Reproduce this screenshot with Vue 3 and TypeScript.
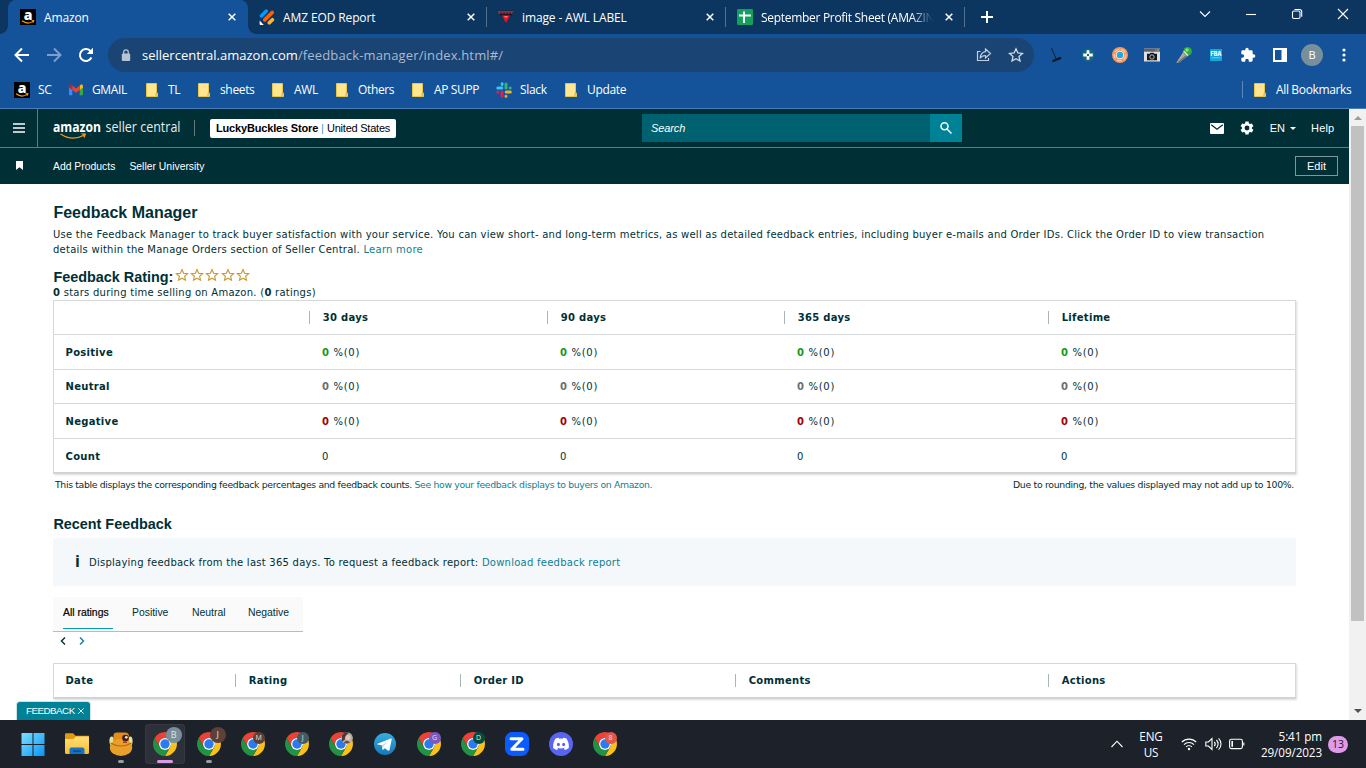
<script setup lang="ts">
interface Tab { title: string; icon: string; active?: boolean; cls?: string }
interface Bookmark { label: string; icon: string }
interface TaskItem { kind: string; letter?: string; color?: string; big?: boolean; running?: boolean; active?: boolean; photo?: boolean }

const tabs: Tab[] = [
  { title: 'Amazon', icon: 'i-amazon', active: true },
  { title: 'AMZ EOD Report', icon: 'i-jotform' },
  { title: 'image - AWL LABEL', icon: 'i-awl' },
  { title: 'September Profit Sheet (AMAZIN', icon: 'i-sheets', cls: 'long' },
]

const bookmarks: Bookmark[] = [
  { label: 'SC', icon: 'i-amazon' },
  { label: 'GMAIL', icon: 'i-gmail' },
  { label: 'TL', icon: 'i-folder' },
  { label: 'sheets', icon: 'i-folder' },
  { label: 'AWL', icon: 'i-folder' },
  { label: 'Others', icon: 'i-folder' },
  { label: 'AP SUPP', icon: 'i-folder' },
  { label: 'Slack', icon: 'i-slack' },
  { label: 'Update', icon: 'i-folder' },
]

const extensions: string[] = ['i-broom', 'i-cross', 'i-ring', 'i-camera', 'i-mic', 'i-fba', 'i-puzzle', 'i-panel']

const periods: string[] = ['30 days', '90 days', '365 days', 'Lifetime']
const ratings = [
  { name: 'Positive', tone: 'good' },
  { name: 'Neutral', tone: 'mid' },
  { name: 'Negative', tone: 'bad' },
]
const filters: string[] = ['All ratings', 'Positive', 'Neutral', 'Negative']
const recentColumns: string[] = ['Date', 'Rating', 'Order ID', 'Comments', 'Actions']

const tasks: TaskItem[] = [
  { kind: 'i-windows' },
  { kind: 'i-explorer' },
  { kind: 'i-bee', running: true },
  { kind: 'i-chrome', letter: 'B', color: '#78909c', big: true, active: true },
  { kind: 'i-chrome', letter: 'J', color: '#5d4037', big: true, running: true },
  { kind: 'i-chrome', letter: 'M', color: '#5d4037' },
  { kind: 'i-chrome', letter: 'J', color: '#455a64' },
  { kind: 'i-chrome', photo: true },
  { kind: 'i-telegram' },
  { kind: 'i-chrome', letter: 'G', color: '#7e57c2' },
  { kind: 'i-chrome', letter: 'D', color: '#004d40' },
  { kind: 'i-zoom' },
  { kind: 'i-discord' },
  { kind: 'i-chrome', letter: '8', color: '#e0564a' },
]
</script>

<template>
  <div class="screen">
    <svg class="sprites" width="0" height="0">
      <defs>
        <linearGradient id="gWin" x1="0" y1="0" x2="1" y2="1"><stop offset="0" stop-color="#7be0ff" /><stop offset="1" stop-color="#0a93f5" /></linearGradient>
        <linearGradient id="gFold" x1="0" y1="0" x2="0" y2="1"><stop offset="0" stop-color="#ffe07a" /><stop offset="1" stop-color="#f9bd2b" /></linearGradient>
        <linearGradient id="gTel" x1="0" y1="0" x2="0" y2="1"><stop offset="0" stop-color="#37aee2" /><stop offset="1" stop-color="#1478b8" /></linearGradient>
      </defs>
      <symbol id="i-amazon" viewBox="0 0 16 16">
        <rect width="16" height="16" fill="#000" />
        <path d="M2 11.8c3.600 2.700 8 2.700 11.200.6M11.600 11.800l2.200-.1-.6 2" fill="none" stroke="#f90" stroke-width="1.100" />
      </symbol>
      <symbol id="i-jotform" viewBox="0 0 16 16">
        <g stroke-linecap="round" fill="none">
          <path d="M2.400 7 7.300 2" stroke="#0099ff" stroke-width="3.400" />
          <path d="M5.800 10.800 13.200 3.500" stroke="#ff6100" stroke-width="3.800" />
          <path d="M10.300 13.800 13.400 10.700" stroke="#ffb629" stroke-width="3.600" />
        </g>
        <path d="M.6 11.600 4.800 16H1.600a1 1 0 0 1-1-1Z" fill="#fff" />
      </symbol>
      <symbol id="i-awl" viewBox="0 0 16 16">
        <path d="M0 1.800h16l-2.500 4.700h-11Z" fill="#25131f" />
        <path d="M.5 3.800h15" stroke="#c9475f" stroke-width="1.300" stroke-dasharray="2 1" />
        <path d="M.5 2.500h15" stroke="#b7a04f" stroke-width=".8" stroke-dasharray="1 1" />
        <path d="M4 6.500h8L8 14Z" fill="#f50f1a" /><path d="M6.500 7.800h3" stroke="#ffb0b0" stroke-width="1" />
      </symbol>
      <symbol id="i-sheets" viewBox="0 0 16 16">
        <rect width="16" height="16" rx="1.200" fill="#12a05c" />
        <path d="M2 6.600h12M7 2.500v11.500" stroke="#fff" stroke-width="2" />
      </symbol>
      <symbol id="i-gmail" viewBox="0 0 16 16">
        <path d="M1 5v7.200c0 .6.4 1 1 1h2.300V7Z" fill="#4285f4" />
        <path d="M15 5v7.200c0 .6-.4 1-1 1h-2.300V7Z" fill="#34a853" />
        <path d="M11.700 4v4L15 5.400V4.200c0-1.600-1.700-2-2.600-1.200Z" fill="#fbbc04" />
        <path d="M4.300 4v4L1 5.400V4.200C1 2.600 2.700 2.200 3.600 3Z" fill="#c5221f" />
        <path d="M4.300 3.600 8 6.400 11.700 3.600V8L8 10.800 4.300 8Z" fill="#ea4335" />
      </symbol>
      <symbol id="i-folder" viewBox="0 0 16 16">
        <path d="M2.500 1.500h10v9.200l1 .4v3.400h-11Z" fill="#ffe58f" stroke="#eac54a" />
        <path d="M12 14.500v-3.200h1.500" fill="none" stroke="#d9ab2c" />
      </symbol>
      <symbol id="i-slack" viewBox="0 0 16 16">
        <g fill="none" stroke-width="3" stroke-linecap="round">
          <path d="M1.800 6.100H5.800M6 1.800h.2" stroke="#36c5f0" /><path d="M6.100 3v.2" stroke="#36c5f0" stroke-width="2" />
          <path d="M10 2v4M14.200 6.100h0" stroke="#2eb67d" />
          <path d="M10.200 10H14.300M10 14.200h0" stroke="#ecb22e" />
          <path d="M6 10v4.100M1.800 10h0" stroke="#e01e5a" />
        </g>
      </symbol>
      <symbol id="i-broom" viewBox="0 0 16 16">
        <path d="M3.500 1 8.200 12" stroke="#123" stroke-width="1" /><path d="M4.500 14.300 13 10.700" stroke="#0b1622" stroke-width="2.200" />
      </symbol>
      <symbol id="i-cross" viewBox="0 0 16 16">
        <circle cx="8" cy="8" r="6.800" fill="#14647e" />
        <path d="M6.600 3.200h2.800v3.400h3.400v2.800H9.400v3.400H6.600V9.400H3.200V6.600h3.400Z" fill="#fff" /><rect x="7" y="7" width="2" height="2" fill="#14647e" />
      </symbol>
      <symbol id="i-ring" viewBox="0 0 16 16">
        <circle cx="8" cy="8" r="8" fill="#f7955a" /><circle cx="8" cy="8" r="5.800" fill="none" stroke="#ffd0aa" stroke-width="1.200" stroke-dasharray="5 2" /><circle cx="8" cy="8" r="4.200" fill="#fde6d4" /><circle cx="8" cy="8" r="3.200" fill="#20a8e8" />
      </symbol>
      <symbol id="i-camera" viewBox="0 0 16 16">
        <rect y="1.500" width="16" height="13" fill="#dfe0e2" /><rect y="1.500" width="16" height="3.200" fill="#59616c" />
        <path d="M11 3.200h1.500" stroke="#ef5a4c" stroke-width="2" /><path d="M13 3.200h2" stroke="#55b46b" stroke-width="2" />
        <path d="M3 6.800h2.800l.8-1h3l.8 1H13v6.400H3Z" fill="#15181b" /><circle cx="8" cy="10" r="2.200" fill="#15181b" stroke="#e5e5e5" stroke-width=".8" />
      </symbol>
      <symbol id="i-mic" viewBox="0 0 16 16">
        <path d="M7.200 5 11.500 9 3 15.800H.3Z" fill="#aaa9a4" /><path d="M10 9 2 15.500" stroke="#6f6c68" stroke-width="1.200" />
        <circle cx="11.600" cy="4.400" r="4.300" fill="#2fac3e" /><circle cx="11" cy="3" r="1.700" fill="#91dc72" />
        <path d="M7.600 4.200 12 8.600" stroke="#dcdcdc" stroke-width="1.600" />
      </symbol>
      <symbol id="i-fba" viewBox="0 0 16 16">
        <rect x="2" y="2" width="12" height="12" fill="#12a5d8" />
        <path d="M3.500 10.800h9" stroke="#7fcbe8" stroke-width=".9" />
      </symbol>
      <symbol id="i-puzzle" viewBox="0 0 24 24">
        <path d="M20.500 11H19V7a2 2 0 0 0-2-2h-4V3.500a2.500 2.500 0 0 0-5 0V5H4a2 2 0 0 0-2 2v3.800h1.500a2.700 2.700 0 0 1 0 5.400H2V20a2 2 0 0 0 2 2h3.800v-1.500a2.700 2.700 0 0 1 5.400 0V22H17a2 2 0 0 0 2-2v-4h1.500a2.500 2.500 0 0 0 0-5Z" fill="#fff" />
      </symbol>
      <symbol id="i-panel" viewBox="0 0 16 16">
        <path fill-rule="evenodd" d="M1 1h14v14H1ZM3 3v10h6.500V3Z" fill="#fff" />
      </symbol>
      <symbol id="i-windows" viewBox="0 0 24 24">
        <path d="M.5 1h11v11H.5ZM12.500 1h11v11h-11ZM.5 13h11v11H.5ZM12.500 13h11v11h-11Z" fill="url(#gWin)" />
      </symbol>
      <symbol id="i-explorer" viewBox="0 0 24 24">
        <path d="M0 2.500a1.200 1.200 0 0 1 1.200-1.200H8l2.500 2.500H24V10H0Z" fill="#e29a10" />
        <path d="M0 7h8.500l2.500-2.500h12a1 1 0 0 1 1 1V20.500a1.500 1.500 0 0 1-1.500 1.500h-21A1.500 1.500 0 0 1 0 20.500Z" fill="url(#gFold)" />
        <path d="M4.500 22v-4.500a2 2 0 0 1 2-2h11a2 2 0 0 1 2 2V22Z" fill="#1572c4" /><path d="M8 19.200h8" stroke="#0b4d8c" stroke-width="1.500" />
      </symbol>
      <symbol id="i-bee" viewBox="0 0 24 24">
        <ellipse cx="2.700" cy="9" rx="2.300" ry="4.500" fill="#d8e6a0" /><ellipse cx="21.300" cy="9" rx="2.300" ry="4.500" fill="#d8e6a0" />
        <path d="M4.500 3.500q0-3 3.500-3h8q4 0 4 4v8H4Z" fill="#e58b1c" />
        <ellipse cx="12" cy="15.500" rx="11.200" ry="8.500" fill="#e8a02a" /><path d="M1.500 11Q12 17 22.500 11" stroke="#b36a12" stroke-width="1.200" fill="none" />
        <circle cx="16.500" cy="6" r="3.300" fill="#3b211c" /><circle cx="17.300" cy="5.300" r="1.400" fill="#efd8d0" /><path d="M14 10.200h4" stroke="#b3261e" stroke-width="1.400" />
      </symbol>
      <symbol id="i-chrome" viewBox="0 0 24 24">
        <path d="M12 6H22.390A12 12 0 0 0 1.610 6L6.800 15A6 6 0 0 1 12 6Z" fill="#ea4335" />
        <path d="M22.390 6A12 12 0 0 1 12 24L17.200 15A6 6 0 0 0 12 6Z" fill="#fbc116" />
        <path d="M1.610 6A12 12 0 0 0 12 24L17.200 15A6 6 0 0 1 6.800 15Z" fill="#229342" />
        <circle cx="12" cy="12" r="6" fill="#fff" /><circle cx="12" cy="12" r="4.700" fill="#2a7af0" />
      </symbol>
      <symbol id="i-telegram" viewBox="0 0 24 24">
        <circle cx="12" cy="12" r="11" fill="url(#gTel)" />
        <path d="M4.500 11.800 17.800 6.600c.6-.2 1.100.2.9 1l-2.200 10.500c-.2.8-.7.9-1.300.6l-3.400-2.500-1.700 1.600c-.3.3-.6.3-.7-.2L8.700 13.300 4.600 12.500c-.5-.2-.5-.5-.1-.7Z" fill="#fff" />
        <path d="M8.800 13.400 15.500 9 10.300 14.200 9.800 17.400" fill="#b7d5e8" />
      </symbol>
      <symbol id="i-zoom" viewBox="0 0 24 24">
        <rect width="24" height="24" rx="7.500" fill="#0b5cff" />
        <path d="M6 6.800h11L6.800 17.300H18" fill="none" stroke="#fff" stroke-width="3" stroke-linecap="round" stroke-linejoin="round" />
      </symbol>
      <symbol id="i-discord" viewBox="0 0 24 24">
        <circle cx="12" cy="12" r="12" fill="#5865f2" />
        <path transform="translate(-1.800 -1.800) scale(1.150)" d="M16.700 7.300a12 12 0 0 0-2.700-.8l-.5.9a11 11 0 0 0-3 0L10 6.500a12 12 0 0 0-2.700.8C5.500 10 4.900 12.800 5.200 15.500a12 12 0 0 0 3.500 1.800l.8-1.300-1-.5.3-.3a8.600 8.600 0 0 0 6.400 0l.3.3-1 .5.8 1.300a12 12 0 0 0 3.500-1.800c.3-3.200-.6-5.900-2.100-8.200Z" fill="#fff" />
        <ellipse cx="9.400" cy="12.500" rx="1.500" ry="1.700" fill="#5865f2" /><ellipse cx="14.600" cy="12.500" rx="1.500" ry="1.700" fill="#5865f2" />
      </symbol>
      <symbol id="i-star" viewBox="0 0 24 24">
        <path d="M12 2.600l2.800 6.400 6.900.6-5.200 4.600 1.500 6.800L12 17.500 6 21l1.500-6.800L2.300 9.600l6.900-.6Z" fill="none" stroke="currentColor" stroke-width="1.900" />
      </symbol>
    </svg>

    <header class="browser">
      <div class="strip">
        <div v-for="t in tabs" :key="t.title" class="tab" :class="{ active: t.active }">
          <span class="ico"><svg class="i16"><use :href="'#' + t.icon" /></svg><em v-if="t.icon === 'i-amazon'" class="letter-a">a</em></span>
          <span class="tab-title" :class="t.cls">{{ t.title }}</span>
          <svg class="close" viewBox="0 0 8 8"><path d="M.7.7 7.300 7.300M7.300.7.7 7.300" /></svg>
        </div>
        <svg class="plus" viewBox="0 0 12 12"><path d="M6 0v12M0 6h12" /></svg>
        <div class="win-controls">
          <svg viewBox="0 0 12 12"><path d="M1 3.500 6 8.500 11 3.500" /></svg>
          <svg viewBox="0 0 12 12"><path d="M1 6.500h10" /></svg>
          <svg viewBox="0 0 12 12"><rect x="1.500" y="3" width="7.500" height="7.500" rx="1.500" /><path d="M3.500 1.500h5a2.200 2.200 0 0 1 2.200 2.200v5" /></svg>
          <svg viewBox="0 0 12 12"><path d="M1 1 11 11M11 1 1 11" /></svg>
        </div>
      </div>

      <div class="toolbar">
        <div class="nav">
          <svg viewBox="0 0 16 16"><path d="M15 8H2M8 1.500 1.500 8 8 14.500" /></svg>
          <svg viewBox="0 0 16 16" class="dim"><path d="M1 8h13M8 1.500 14.500 8 8 14.500" /></svg>
          <svg viewBox="0 0 16 16"><path d="M13.400 10.500A6 6 0 1 1 12.200 3.800L13.500 5.200" /><path class="solid" d="M15 .8V7H8.800Z" /></svg>
        </div>
        <div class="omnibox">
          <svg class="lock" viewBox="0 0 10 13"><rect x=".8" y="4.500" width="8.400" height="7.500" rx="1" /><path d="M2.700 5V3.200a2.300 2.300 0 0 1 4.600 0V5" /></svg>
          <span class="url"><b>sellercentral.amazon.com</b><i>/feedback-manager/index.html#/</i></span>
          <svg class="share" viewBox="0 0 16 16"><path d="M4.500 4.500h-3v9h11V11" /><path d="M9.500 2 14.500 6.500 9.500 11V8.500C7 8.500 5.200 9.300 4 11.300 4.400 7.500 6.300 5 9.500 4.600Z" /></svg>
          <svg class="fav"><use href="#i-star" /></svg>
        </div>
        <div class="exts">
          <span v-for="e in extensions" :key="e" class="ico"><svg class="i16"><use :href="'#' + e" /></svg><em v-if="e === 'i-fba'" class="letter-fba">FBA</em></span>
          <span class="avatar">B</span>
          <svg class="i16" viewBox="0 0 16 16"><circle cx="8" cy="3" r="1.600" /><circle cx="8" cy="8" r="1.600" /><circle cx="8" cy="13" r="1.600" /></svg>
        </div>
      </div>

      <div class="bookmarks">
        <div class="marks">
          <span v-for="b in bookmarks" :key="b.label" class="mark"><span class="ico"><svg class="i16"><use :href="'#' + b.icon" /></svg><em v-if="b.icon === 'i-amazon'" class="letter-a">a</em></span>{{ b.label }}</span>
        </div>
        <span class="mark all"><svg class="i16"><use href="#i-folder" /></svg>All Bookmarks</span>
      </div>
    </header>

    <div class="viewport">
      <div class="page">
        <div class="topbar">
          <div class="burger"><svg viewBox="0 0 12 10"><path d="M0 1h12M0 5h12M0 9h12" /></svg></div>
          <svg class="logo" viewBox="0 0 130 28">
            <text class="amz" x="0" y="17" textLength="48" lengthAdjust="spacingAndGlyphs">amazon</text>
            <text class="sc" x="52.500" y="17" textLength="75" lengthAdjust="spacingAndGlyphs">seller central</text>
            <path d="M7.500 19C15 24 24 24 31.500 20M28.500 18.900l3.700.2-1.200 3.400" />
          </svg>
          <span class="bar"></span>
          <div class="store"><b>LuckyBuckles Store</b><em>|</em><span>United States</span></div>
          <div class="search">
            <span>Search</span>
            <div class="search-btn"><svg viewBox="0 0 14 14"><circle cx="5.500" cy="5.200" r="3.500" /><path d="M8 8 12.500 12.500" /></svg></div>
          </div>
          <div class="util">
            <svg class="mail" viewBox="0 0 14 11"><rect width="14" height="11" rx="1" fill="#fff" /><path d="M1.200 1.800 7 6.300 12.800 1.800" fill="none" stroke="#002f36" stroke-width="1.300" /></svg>
            <svg class="gear" viewBox="0 0 24 24"><path fill="#fff" fill-rule="evenodd" d="M9.300 1h5.400l.6 3.200 1.900 1.100 3.100-1.100L23 8.800l-2.500 2.100v2.200L23 15.200l-2.700 4.600-3.100-1.100-1.900 1.100-.6 3.200H9.300l-.6-3.200-1.900-1.100-3.100 1.100L1 15.200l2.500-2.100v-2.200L1 8.800l2.700-4.600 3.100 1.100 1.900-1.100ZM12 7.800a4.200 4.200 0 1 0 0 8.400 4.200 4.200 0 0 0 0-8.400Z" /></svg>
            <span class="lang">EN<i></i></span>
            <span class="help">Help</span>
          </div>
        </div>
        <div class="subbar">
          <svg class="flag" viewBox="0 0 7 9"><path d="M0 0h7v9L3.500 6.300 0 9Z" fill="#fff" /></svg>
          <span class="link-a">Add Products</span><span>Seller University</span>
          <button class="edit">Edit</button>
        </div>

        <main class="content">
          <h1>Feedback Manager</h1>
          <p class="intro">Use the Feedback Manager to track buyer satisfaction with your service. You can view short- and long-term metrics, as well as detailed feedback entries, including buyer e-mails and Order IDs. Click the Order ID to view transaction<br>details within the Manage Orders section of Seller Central. <a>Learn more</a></p>
          <h2 class="rating">Feedback Rating:<span class="stars"><svg v-for="n in 5" :key="n"><use href="#i-star" /></svg></span></h2>
          <p class="since"><b>0</b> stars during time selling on Amazon. (<b>0</b> ratings)</p>

          <div class="table metrics">
            <div class="row head"><span></span><span v-for="p in periods" :key="p" class="sep">{{ p }}</span></div>
            <div v-for="r in ratings" :key="r.name" class="row">
              <b class="name">{{ r.name }}</b>
              <span v-for="p in periods" :key="p" class="cell"><b :class="r.tone">0</b> %(0)</span>
            </div>
            <div class="row total"><b class="name">Count</b><span v-for="p in periods" :key="p" class="cell">0</span></div>
          </div>
          <div class="caption">
            <span>This table displays the corresponding feedback percentages and feedback counts. <a>See how your feedback displays to buyers on Amazon.</a></span>
            <span class="rounding">Due to rounding, the values displayed may not add up to 100%.</span>
          </div>

          <h2 class="recent">Recent Feedback</h2>
          <div class="info"><b>i</b><span>Displaying feedback from the last 365 days. To request a feedback report: <a>Download feedback report</a></span></div>
          <div class="filters"><span v-for="(f, i) in filters" :key="f" :class="{ on: i === 0 }">{{ f }}</span></div>
          <div class="pager">
            <svg viewBox="0 0 6 8"><path d="M5 .6 1.500 4 5 7.400" /></svg>
            <svg viewBox="0 0 6 8" class="next"><path d="M1 .6 4.500 4 1 7.400" /></svg>
          </div>
          <div class="table entries"><div class="row head"><span v-for="(c, i) in recentColumns" :key="c" :class="i ? 'sep' : 'name'">{{ c }}</span></div></div>
        </main>
        <div class="fb-tab">FEEDBACK<svg viewBox="0 0 6 6"><path d="M.3.3 5.700 5.700M5.700.3.3 5.700" /></svg></div>
      </div>
      <div class="scroll"><i class="up"></i><div class="thumb"></div><i class="down"></i></div>
    </div>

    <footer class="taskbar">
      <div class="apps">
        <div v-for="(t, i) in tasks" :key="i" class="app" :class="{ active: t.active, running: t.running }">
          <svg class="app-icon"><use :href="'#' + t.kind" /></svg>
          <span v-if="t.letter" class="badge" :class="{ big: t.big }" :style="{ background: t.color }">{{ t.letter }}</span>
          <svg v-if="t.photo" class="badge" viewBox="0 0 12 12"><circle cx="6" cy="6" r="6" fill="#b9aaa2" /><path d="M1 3.500A6 6 0 0 1 8 .4L5 3.500 3.500 8 1 9.500Z" fill="#4a3a38" /><circle cx="7" cy="5.500" r="2.600" fill="#e3c6b8" /><path d="M2.500 10.500 6 8.500l3 2A6 6 0 0 1 2.500 10.500Z" fill="#6b4a42" /></svg>
        </div>
      </div>
      <div class="tray">
        <svg class="chev" viewBox="0 0 12 8"><path d="M.5 7 6 1.200 11.500 7" /></svg>
        <div class="kbd">ENG<br>US</div>
        <svg class="wifi" viewBox="0 0 16 14"><path d="M.8 5.200a10 10 0 0 1 14.400 0M3 7.600a7 7 0 0 1 10 0M5.200 9.900a4 4 0 0 1 5.600 0" /><circle cx="8" cy="12" r="1.200" /></svg>
        <svg class="vol" viewBox="0 0 17 14"><path d="M.8 5h2.600L7 1.600v10.800L3.400 9H.8ZM9.200 4.800a3.200 3.200 0 0 1 0 4.400M11.400 3a5.600 5.600 0 0 1 0 8M13.600 1.300a8 8 0 0 1 0 11.400" /></svg>
        <svg class="bat" viewBox="0 0 16 12"><rect x=".6" y="1.200" width="12.800" height="9.400" rx="1.800" /><path d="M14.800 4.500v3" /><rect class="fill" x="2.400" y="3" width="1.600" height="5.800" /></svg>
        <div class="clock">5:41 pm<br>29/09/2023</div>
        <span class="count">13</span>
      </div>
    </footer>
  </div>
</template>

<style>
html, body { margin: 0; overflow: hidden; }
</style>

<style scoped>
* { box-sizing: border-box; }
.screen { width: 1366px; height: 768px; display: flex; flex-direction: column; overflow: hidden; font-family: "Open Sans", "Noto Sans", sans-serif; background: #fff; }
.sprites { position: absolute; }
svg { display: block; flex: none; }
.i16 { width: 16px; height: 16px; }
.ico { position: relative; width: 16px; height: 16px; flex: none; }
.letter-a { position: absolute; left: 0; top: -2px; width: 16px; font: 800 14px/16px "Open Sans", sans-serif; letter-spacing: 0; text-align: center; color: #fff; }
.letter-fba { position: absolute; left: 1px; top: 3px; width: 14px; font: 800 5.5px/8px Inter, sans-serif; letter-spacing: 0; text-align: center; color: #fff; }

.browser { height: 109px; background: #14539a; border-bottom: 1px solid #4a7db5; color: #fff; }
.strip { height: 34px; background: #0c3560; display: flex; align-items: center; padding-left: 8px; }
.tab { width: 239px; flex: none; height: 34px; display: flex; align-items: center; padding: 0 11px 0 12px; position: relative; font-size: 12px; letter-spacing: -0.12px; }
.tab:not(.active)::after { content: ""; position: absolute; right: -1px; top: 7px; width: 1px; height: 20px; background: #56718f; }
.tab.active { background: #14539a; border-radius: 8px 8px 0 0; box-shadow: 1px 0 0 #14539a; }
.tab.active::before, .tab.active::after { content: ""; position: absolute; bottom: 0; width: 8px; height: 8px; }
.tab.active::before { left: -8px; background: radial-gradient(circle at 0 0, transparent 7.5px, #14539a 8px); }
.tab.active::after { right: -9px; background: radial-gradient(circle at 100% 0, transparent 7.5px, #14539a 8px); }
.tab-title { margin-left: 8px; flex: 1; min-width: 0; white-space: nowrap; margin-right: 11px; }
.tab-title.long { letter-spacing: -0.3px; -webkit-mask-image: linear-gradient(90deg, #000 150px, transparent 172px); mask-image: linear-gradient(90deg, #000 150px, transparent 172px); }
.close { width: 8px; height: 8px; fill: none; stroke: #fff; stroke-width: 1.5; }
.plus { width: 12px; height: 12px; margin-left: 17px; stroke: #fff; stroke-width: 2; }
.win-controls { margin-left: auto; display: flex; gap: 34px; padding-right: 17px; margin-bottom: 6px; }
.win-controls svg { width: 12px; height: 12px; fill: none; stroke: #fff; stroke-width: 1.1; }

.toolbar { height: 42px; display: flex; align-items: center; padding-left: 14px; }
.nav { display: flex; gap: 16px; width: 94px; }
.nav svg { width: 16px; height: 16px; fill: none; stroke: #fff; stroke-width: 2; }
.nav .solid { fill: #fff; stroke: none; }
.nav .dim { stroke: #7d9fcb; }
.omnibox { width: 926px; height: 34px; border-radius: 17px; background: #1a4473; display: flex; align-items: center; padding: 0 10px 0 13px; }
.lock { width: 10px; height: 13px; margin-right: 11px; fill: #b9c4d2; }
.lock path { fill: none; stroke: #b9c4d2; stroke-width: 1.3; }
.url { font-size: 13px; flex: 1; }
.url b { font-weight: 400; }
.url i { font-style: normal; color: #a9bbd0; letter-spacing: 0.15px; }
.share { width: 16px; height: 16px; margin-right: 16px; fill: none; stroke: #c3cfdd; stroke-width: 1.2; }
.fav { width: 16px; height: 16px; color: #d3dbe6; }
.exts { display: flex; align-items: center; gap: 16px; padding-left: 14px; }
.exts > svg { fill: #fff; }
.avatar { width: 22px; height: 22px; margin: 0 -3px; border-radius: 50%; background: #78909c; font-size: 11px; line-height: 22px; text-align: center; }
.bookmarks { height: 32px; display: flex; align-items: center; justify-content: space-between; padding: 0 0 5px 14px; font-size: 12px; letter-spacing: -0.35px; }
.marks { display: grid; grid-template-columns: 54px 76px 52px 74px 64px 76px 86px 67px 70px; }
.mark { display: flex; align-items: center; gap: 8px; white-space: nowrap; }
.all { border-left: 1px solid #5b86b9; padding-left: 9px; width: 124px; }

.viewport { height: 611px; display: flex; }
.page { width: 1349px; position: relative; overflow: hidden; background: #fff; color: #002f36; }
.topbar { height: 39px; background: #002f36; border-bottom: 1px solid #66787a; display: flex; align-items: center; color: #fff; font: 11px "Liberation Sans", Arial, sans-serif; }
.burger { width: 38px; height: 38px; border-right: 1px solid #66787a; display: flex; align-items: center; padding-left: 13px; }
.burger svg { width: 12px; height: 10px; stroke: #fff; stroke-width: 1.5; }
.logo { width: 130px; height: 28px; margin-left: 15px; margin-top: 2px; }
.logo text { fill: #fff; font-family: "Open Sans", sans-serif; font-size: 15px; }
.logo .amz { font-weight: 700; }
.logo .sc { font-weight: 400; fill: #e6ecec; }
.logo path { fill: none; stroke: #f7981d; stroke-width: 1.4; }
.bar { width: 1px; height: 16px; background: #66787a; margin-left: 11px; }
.store { width: 186px; height: 19px; margin-left: 15px; background: #fff; border-radius: 2px; color: #000; display: flex; align-items: center; padding-left: 6px; white-space: nowrap; }
.store b { width: 102px; letter-spacing: -0.17px; }
.store em { width: 9px; text-align: center; color: #5596b5; font-style: normal; }
.store span { letter-spacing: -0.23px; }
.search { width: 320px; height: 28px; margin-left: 246px; background: #006170; display: flex; justify-content: space-between; align-items: center; padding-left: 9px; font-style: italic; letter-spacing: -0.1px; }
.search-btn { width: 32px; height: 28px; background: #008296; display: flex; align-items: center; justify-content: center; }
.search-btn svg { width: 14px; height: 14px; fill: none; stroke: #fff; stroke-width: 1.5; }
.util { display: flex; align-items: center; margin-left: auto; padding-right: 14px; }
.help { width: 24px; letter-spacing: 0.2px; }
.mail { width: 14px; height: 11px; }
.gear { width: 14px; height: 14px; margin: 0 16px; }
.lang { display: flex; align-items: center; margin-right: 15px; }
.lang i { border: 3.5px solid transparent; border-top-color: #fff; border-bottom: 0; margin-left: 5px; }
.subbar { height: 36px; background: #002f36; display: flex; align-items: center; color: #fff; padding: 0 11px 0 16px; font: 10.4px "Liberation Sans", Arial, sans-serif; }
.flag { width: 7px; height: 9px; margin: 0 30px 2px 0; }
.link-a { margin-right: 14px; }
.edit { margin-left: auto; margin-bottom: 1px; width: 43px; height: 20px; padding: 0; border: 1px solid #7e9699; background: none; color: #fff; font: 11px "Liberation Sans", Arial, sans-serif; }

.content { padding: 19px 53px 0; font: 10px "DejaVu Sans", Verdana, sans-serif; letter-spacing: 0.248px; }
.content p, .content h1, .content h2 { margin: 0; }
.content a { color: #0d7f92; }
h1, h2 { font-family: "Liberation Sans", Arial, sans-serif; line-height: 20px; height: 20px; letter-spacing: 0; padding-left: 0.4px; }
h1 { font-size: 16px; }
h2 { font-size: 14.4px; }
.intro { padding-top: 4px; line-height: 15px; white-space: nowrap; }
.content h2.rating { margin-top: 10px; display: flex; }
.stars { display: flex; gap: 1.2px; margin: 1px 0 0 1.6px; color: #c9962f; }
.stars svg { width: 14px; height: 14px; }
.since { height: 13px; line-height: 12px; letter-spacing: 0.26px; }
.table { width: 1243px; border: 1px solid #d5d9d9; border-bottom: 2px solid #cfd4d4; box-shadow: 1px 1px 2px rgba(0, 0, 0, 0.14); }
.metrics { height: 174px; display: grid; grid-template-rows: 33px 35px 34px 35px 34px; }
.row { display: grid; grid-template-columns: 255px 238px 237px 264px auto; align-items: center; }
.metrics .row + .row { border-top: 1px solid #d5d9d9; }
.metrics .row.total { padding-top: 1px; }
.name { padding-left: 11.5px; line-height: 13px; letter-spacing: 0.3px; }
.cell { padding-left: 13px; letter-spacing: 0.7px; line-height: 13px; }
.head { font-weight: 700; letter-spacing: 0.3px; }
.sep { border-left: 1px solid #a9b5b7; line-height: 13px; padding-left: 12.7px; }
.good { color: #149a14; }
.mid { color: #6a6f73; }
.bad { color: #a00000; }
.caption { display: flex; justify-content: space-between; width: 1241px; margin-left: 2px; padding-right: 2px; height: 22px; line-height: 21px; font-size: 9.3px; letter-spacing: -0.335px; white-space: nowrap; }
.rounding { letter-spacing: -0.29px; }
.content h2.recent { margin-top: 18px; }
.info { width: 1243px; height: 48px; margin-top: 4px; background: #f4f8fa; display: flex; align-items: center; padding-left: 22px; }
.info b { font: 700 16px "Open Sans", sans-serif; width: 14px; margin-top: -2px; }
.filters { width: 250px; height: 35px; margin-top: 11px; background: #fafafa; border-bottom: 1px solid #bfbaba; display: grid; grid-template-columns: 69px 60px 56px 60px; padding-left: 10px; font: 10.4px "Liberation Sans", Arial, sans-serif; line-height: 31px; letter-spacing: 0; }
.filters .on { width: 50px; height: 32px; border-bottom: 1px solid #00a3b4; color: #000; -webkit-text-stroke: 0.2px #000; }
.pager { height: 18px; margin-bottom: 13px; display: flex; align-items: center; gap: 13px; padding-left: 7px; }
.pager svg { width: 6px; height: 8px; fill: none; stroke: #002f36; stroke-width: 1.4; }
.pager .next { stroke: #0d7f92; }
.entries .row { height: 33px; grid-template-columns: 181px 225px 275px 313px auto; }
.fb-tab { position: absolute; left: 17px; bottom: 0; width: 73px; height: 18px; background: #008296; border-radius: 3px 3px 0 0; color: #fff; font: 9.8px/18px "Liberation Sans", Arial, sans-serif; letter-spacing: -0.52px; display: flex; align-items: center; padding-left: 9px; box-shadow: 0 0 0 1px #cfe3e6; }
.fb-tab svg { width: 6px; height: 6px; margin-left: 3px; stroke: #fff; stroke-width: 0.9; }
.scroll { width: 17px; background: #f1f1f1; display: flex; flex-direction: column; align-items: center; }
.scroll i { border: 4px solid transparent; }
.scroll .up { border-top: 0; border-bottom-color: #9c9c9c; margin: 7px 0 6px; }
.thumb { width: 13px; height: 495px; background: #c1c1c1; }
.scroll .down { border-bottom: 0; border-top-color: #505050; margin-top: auto; margin-bottom: 7px; }

.taskbar { height: 48px; background: #1d212a; display: flex; justify-content: space-between; color: #fff; }
.apps { display: flex; align-items: center; gap: 4px; padding-left: 12.6px; }
.app { width: 40px; height: 40px; position: relative; display: flex; align-items: center; justify-content: center; border-radius: 4px; }
.app.active { background: #2d3038; box-shadow: inset 0 0 0 1px #363941; }
.app-icon { width: 24px; height: 24px; }
.badge { position: absolute; left: 20px; top: 8px; width: 12px; height: 12px; border-radius: 50%; font-size: 7px; line-height: 12px; text-align: center; color: #dfe3e6; }
.badge.big { left: 21px; top: 3px; width: 16px; height: 16px; font-size: 9px; line-height: 16px; }
.app.running::after, .app.active::after { content: ""; position: absolute; bottom: 1px; width: 6px; height: 3px; border-radius: 2px; background: #9a9ca0; }
.app.active::after { width: 16px; background: #dc9be6; }
.tray { display: flex; align-items: center; font-size: 11.7px; line-height: 16px; letter-spacing: -0.1px; padding-right: 18px; }
.tray svg { fill: none; stroke: #fff; stroke-width: 1.1; }
.chev { width: 12px; height: 8px; margin-right: 16px; }
.kbd { width: 24px; text-align: center; margin: 0 18px 0 0; }
.wifi { width: 16px; height: 14px; margin-right: 7.5px; }
.wifi circle, .bat .fill { fill: #fff; stroke: none; }
.vol { width: 17px; height: 14px; margin-right: 7.5px; }
.bat { width: 16px; height: 12px; }
.clock { width: 77px; text-align: right; }
.count { width: 20px; height: 17px; margin-left: 6px; border-radius: 9px; background: #df9be8; color: #2b1030; font-size: 10.5px; line-height: 17px; text-align: center; }
</style>
